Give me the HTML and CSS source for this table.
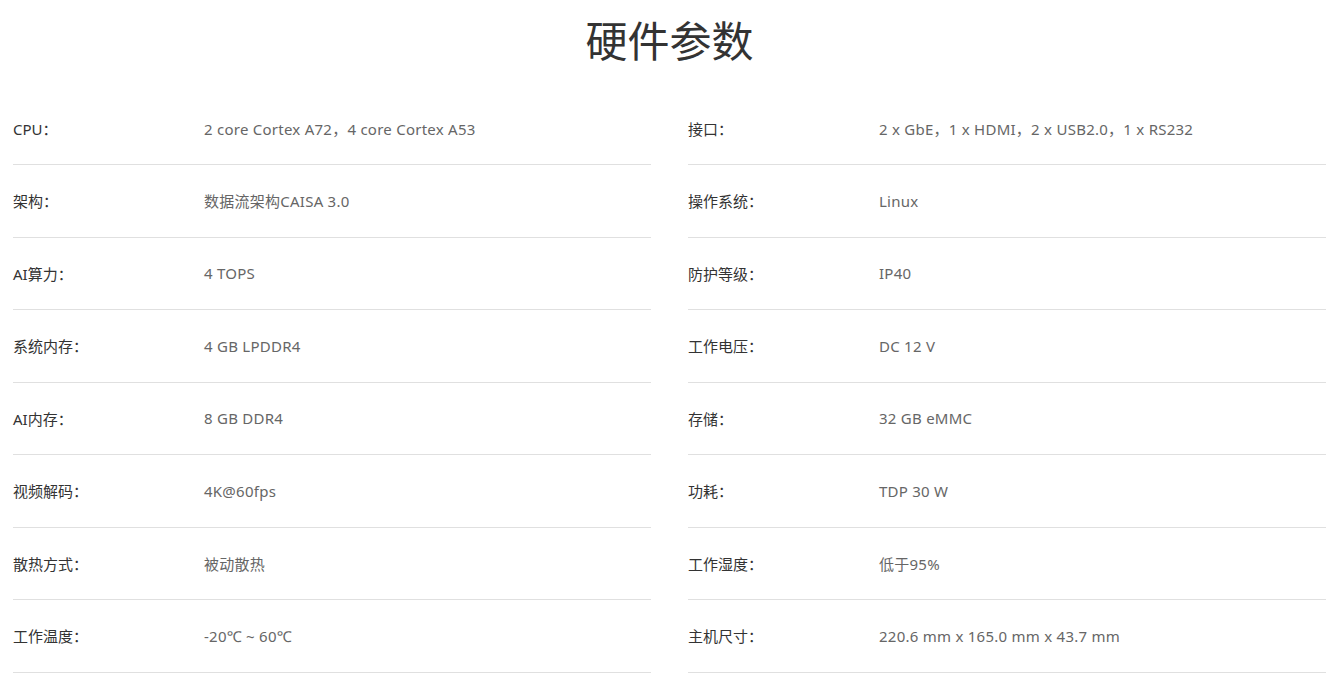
FILE: index.html
```html
<!DOCTYPE html>
<html lang="zh-CN">
<head>
<meta charset="utf-8">
<title>硬件参数</title>
<link rel="stylesheet" href="styles.css">
</head>
<body>
<div class="page">
  <h1 class="title">硬件参数</h1>
  <div class="grid">
    <div class="col">
      <div class="row"><span class="label">CPU：</span><span class="value">2 core Cortex A72，4 core Cortex A53</span></div>
      <div class="row"><span class="label">架构：</span><span class="value">数据流架构CAISA 3.0</span></div>
      <div class="row"><span class="label">AI算力：</span><span class="value">4 TOPS</span></div>
      <div class="row"><span class="label">系统内存：</span><span class="value">4 GB LPDDR4</span></div>
      <div class="row"><span class="label">AI内存：</span><span class="value">8 GB DDR4</span></div>
      <div class="row"><span class="label">视频解码：</span><span class="value">4K@60fps</span></div>
      <div class="row"><span class="label">散热方式：</span><span class="value">被动散热</span></div>
      <div class="row"><span class="label">工作温度：</span><span class="value">-20℃ ~ 60℃</span></div>
    </div>
    <div class="col">
      <div class="row"><span class="label">接口：</span><span class="value">2 x GbE，1 x HDMI，2 x USB2.0，1 x RS232</span></div>
      <div class="row"><span class="label">操作系统：</span><span class="value">Linux</span></div>
      <div class="row"><span class="label">防护等级：</span><span class="value">IP40</span></div>
      <div class="row"><span class="label">工作电压：</span><span class="value">DC 12 V</span></div>
      <div class="row"><span class="label">存储：</span><span class="value">32 GB eMMC</span></div>
      <div class="row"><span class="label">功耗：</span><span class="value">TDP 30 W</span></div>
      <div class="row"><span class="label">工作湿度：</span><span class="value">低于95%</span></div>
      <div class="row"><span class="label">主机尺寸：</span><span class="value">220.6 mm x 165.0 mm x 43.7 mm</span></div>
    </div>
  </div>
</div>
</body>
</html>
```
FILE: styles.css
```css
html, body {
  margin: 0;
  padding: 0;
  background: #fff;
}
body {
  font-family: "Noto Sans", "Noto Sans CJK SC", sans-serif;
  color: #333;
}
.page {
  padding: 0 14px 0 13px;
}
.title {
  margin: 0;
  height: 92.5px;
  line-height: 78px;
  text-align: center;
  font-size: 42px;
  font-weight: normal;
  color: #333;
  font-family: "Noto Sans CJK SC", sans-serif;
}
.grid {
  display: grid;
  grid-template-columns: 1fr 1fr;
  column-gap: 37px;
}
.row {
  display: flex;
  align-items: center;
  height: 72.5px;
  box-sizing: border-box;
  border-bottom: 1px solid #e0e0e0;
  font-size: 15px;
}
.label {
  width: 191px;
  flex: none;
  color: #333;
}
.value {
  color: #666;
  letter-spacing: 0.25px;
}
```
